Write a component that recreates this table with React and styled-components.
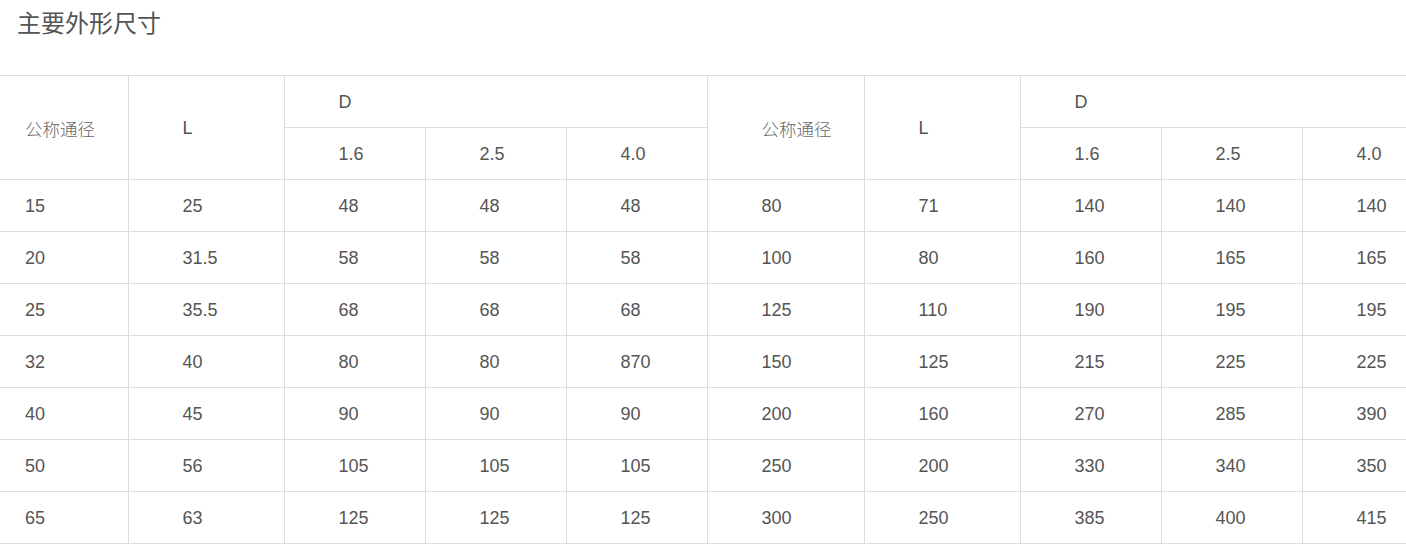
import styled, { createGlobalStyle } from 'styled-components';

const GlobalStyle = createGlobalStyle`
  html, body {
    margin: 0;
    padding: 0;
    background: #fff;
    overflow: hidden;
  }
  body {
    font-family: "Liberation Sans", Arial, "Noto Sans CJK SC", sans-serif;
    color: #555;
  }
`;

const Section = styled.section`
  width: 1406px;
`;

const Title = styled.h3`
  margin: 0;
  padding: 7px 0 0 17px;
  height: 75px;
  box-sizing: border-box;
  font-size: 24px;
  font-weight: normal;
  line-height: 30px;
  color: #555;
  font-family: "Noto Sans CJK SC", sans-serif;
`;

const Table = styled.table`
  width: 100%;
  table-layout: fixed;
  border-collapse: collapse;
  border-top: 1px solid #ddd;
`;

const Cell = styled.td`
  height: 49px;
  padding: 2px 0 0 ${(p) => (p.$first ? 25 : 54)}px;
  border: 1px solid #ddd;
  border-top: none;
  font-size: 18px;
  font-weight: normal;
  text-align: left;
  vertical-align: middle;
  color: #555;
  white-space: nowrap;

  &:first-child {
    border-left: none;
  }
  &:last-child {
    border-right: none;
  }
`;

const HeadText = styled.span`
  font-family: "Noto Sans CJK SC", sans-serif;
  font-size: 17.5px;
  font-weight: 300;
  color: #666;
`;

const widths = [128, 156, 141, 141, 141, 157, 156, 141, 141, 104];

const rows = [
  ['15', '25', '48', '48', '48', '80', '71', '140', '140', '140'],
  ['20', '31.5', '58', '58', '58', '100', '80', '160', '165', '165'],
  ['25', '35.5', '68', '68', '68', '125', '110', '190', '195', '195'],
  ['32', '40', '80', '80', '870', '150', '125', '215', '225', '225'],
  ['40', '45', '90', '90', '90', '200', '160', '270', '285', '390'],
  ['50', '56', '105', '105', '105', '250', '200', '330', '340', '350'],
  ['65', '63', '125', '125', '125', '300', '250', '385', '400', '415'],
];

const pressures = ['1.6', '2.5', '4.0'];

export default function App() {
  return (
    <>
      <GlobalStyle />
      <Section>
        <Title>主要外形尺寸</Title>
        <Table>
          <colgroup>
            {widths.map((w, i) => (
              <col key={i} style={{ width: w }} />
            ))}
          </colgroup>
          <tbody>
            <tr>
              <Cell as="th" rowSpan={2} $first>
                <HeadText>公称通径</HeadText>
              </Cell>
              <Cell as="th" rowSpan={2}>L</Cell>
              <Cell as="th" colSpan={3}>D</Cell>
              <Cell as="th" rowSpan={2}>
                <HeadText>公称通径</HeadText>
              </Cell>
              <Cell as="th" rowSpan={2}>L</Cell>
              <Cell as="th" colSpan={3}>D</Cell>
            </tr>
            <tr>
              {pressures.map((p) => (
                <Cell key={'a' + p}>{p}</Cell>
              ))}
              {pressures.map((p) => (
                <Cell key={'b' + p}>{p}</Cell>
              ))}
            </tr>
            {rows.map((r, i) => (
              <tr key={i}>
                {r.map((v, j) => (
                  <Cell key={j} $first={j === 0}>
                    {v}
                  </Cell>
                ))}
              </tr>
            ))}
          </tbody>
        </Table>
      </Section>
    </>
  );
}
